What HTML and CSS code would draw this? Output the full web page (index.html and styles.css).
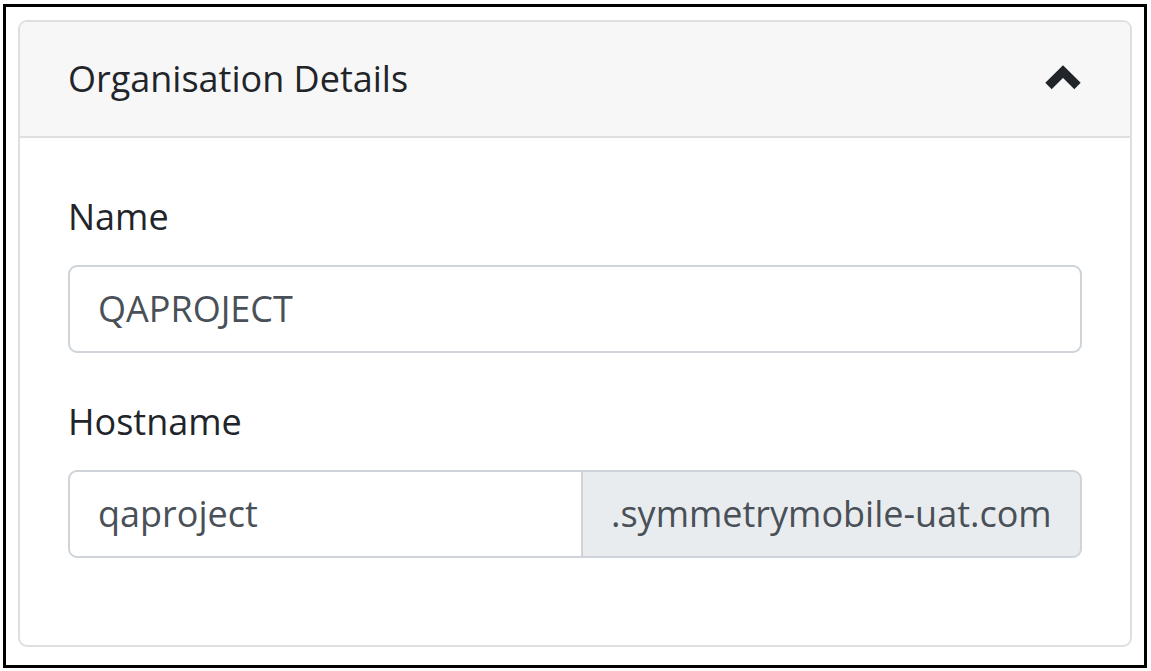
FILE: index.html
```html
<!DOCTYPE html>
<html lang="en">
<head>
<meta charset="utf-8">
<title>Organisation Details</title>
<link rel="stylesheet" href="styles.css">
</head>
<body>
<div class="frame">
  <section class="card">
    <header class="card-header">
      <span class="card-title">Organisation Details</span>
      <svg class="chevron" width="38" height="26" viewBox="0 0 38 26" aria-hidden="true">
        <polyline points="4.5,22 19,7.5 33.5,22" fill="none" stroke="#212529" stroke-width="9" stroke-linecap="butt" stroke-linejoin="miter"/>
      </svg>
    </header>
    <div class="card-body">
      <div class="form-group">
        <label class="form-label">Name</label>
        <div class="form-control">QAPROJECT</div>
      </div>
      <div class="form-group last">
        <label class="form-label">Hostname</label>
        <div class="input-group">
          <div class="form-control grouped">qaproject</div>
          <div class="input-append">.symmetrymobile-uat.com</div>
        </div>
      </div>
    </div>
  </section>
</div>
</body>
</html>
```

FILE: styles.css
```css
html, body {
  margin: 0;
  padding: 0;
  background: #ffffff;
}

body {
  font-family: "Open Sans", "Noto Sans", "Liberation Sans", sans-serif;
  font-size: 36px;
  line-height: 54px;
  color: #212529;
}

.frame {
  box-sizing: border-box;
  width: 1144px;
  height: 664px;
  margin: 4px 4px 3px 3px;
  border: 3px solid #000000;
  padding: 13px 12px 18px 12px;
}

.card {
  box-sizing: border-box;
  height: 627px;
  border: 2px solid #dfdfdf;
  border-radius: 9px;
  background: #ffffff;
  overflow: hidden;
}

.card-header {
  display: flex;
  align-items: center;
  justify-content: space-between;
  height: 114px;
  padding: 0 48px;
  background: #f7f7f7;
  border-bottom: 2px solid #dfdfdf;
}

.card-title {
  color: #212529;
}

.chevron {
  display: block;
  margin-top: -4px;
}

.card-body {
  padding: 52px 48px 43px 48px;
}

.form-group {
  margin-bottom: 42px;
}

.form-group.last {
  margin-bottom: 0;
}

.form-label {
  display: block;
  margin-bottom: 21px;
  color: #212529;
}

.form-control {
  box-sizing: border-box;
  height: 88px;
  padding: 0 28px;
  border: 2px solid #ced4da;
  border-radius: 9px;
  background: #ffffff;
  color: #495057;
  display: flex;
  align-items: center;
}

.input-group {
  display: flex;
}

.form-control.grouped {
  flex: 1 1 auto;
  border-top-right-radius: 0;
  border-bottom-right-radius: 0;
}

.input-append {
  box-sizing: border-box;
  height: 88px;
  width: 501px;
  margin-left: -2px;
  padding: 0 28px;
  border: 2px solid #ced4da;
  border-radius: 0 9px 9px 0;
  background: #e9ecef;
  color: #495057;
  display: flex;
  align-items: center;
  white-space: nowrap;
}
```
